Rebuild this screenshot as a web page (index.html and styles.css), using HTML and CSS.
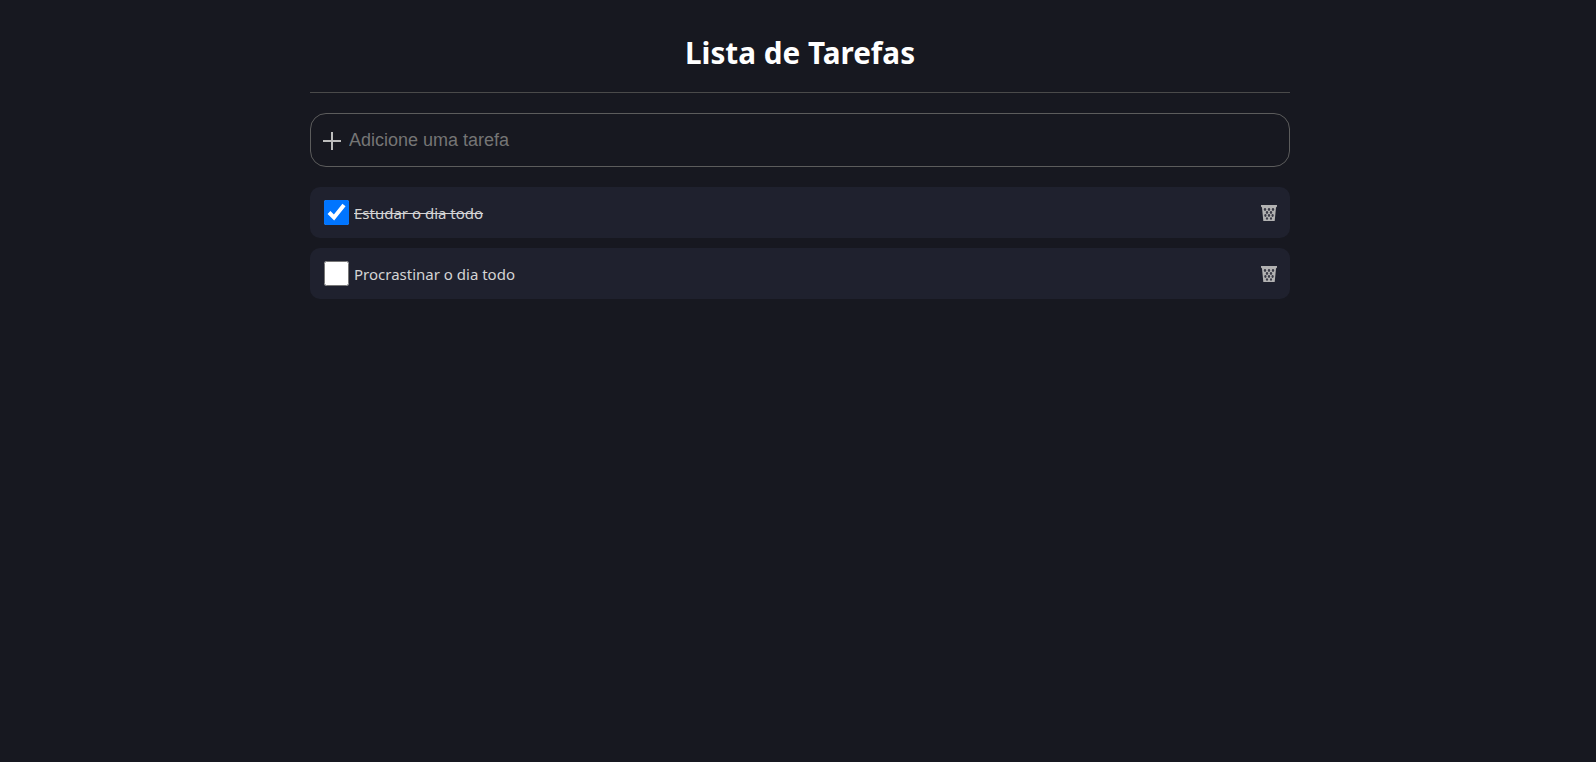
FILE: index.html
```html
<!DOCTYPE html>
<html lang="pt-BR">
<head>
  <meta charset="UTF-8" />
  <title>Lista de Tarefas</title>
  <link rel="stylesheet" href="styles.css">
</head>
<body>
  <svg class="defs" width="0" height="0">
    <symbol id="bin" viewBox="0 0 16 16">
      <path d="M0 0h16v1.500l-1 1-1.300 13.500H2.300L1 2.500l-1-1z" fill="#b2b2b2"/>
      <g fill="#3a3b47">
        <ellipse cx="4" cy="4.500" rx="1.200" ry="1.400"/>
        <ellipse cx="8" cy="4.500" rx="1.200" ry="1.400"/>
        <ellipse cx="12" cy="4.500" rx="1.200" ry="1.400"/>
        <ellipse cx="6" cy="7.500" rx="1.200" ry="1.400"/>
        <ellipse cx="10" cy="7.500" rx="1.200" ry="1.400"/>
        <ellipse cx="4.400" cy="10.500" rx="1.100" ry="1.400"/>
        <ellipse cx="8" cy="10.500" rx="1.200" ry="1.400"/>
        <ellipse cx="11.600" cy="10.500" rx="1.100" ry="1.400"/>
        <ellipse cx="6" cy="13.500" rx="1.100" ry="1.300"/>
        <ellipse cx="10" cy="13.500" rx="1.100" ry="1.300"/>
      </g>
    </symbol>
  </svg>
  <div class="container">
    <h1>Lista de Tarefas</h1>
    <hr />
    <div class="new-task">
      <svg class="plus" width="20" height="20" viewBox="0 0 20 20"><path d="M10 1v18M1 10h18" stroke="#bcbcbc" stroke-width="2" fill="none"/></svg>
      <input type="text" placeholder="Adicione uma tarefa" />
    </div>
    <ul class="tasks">
      <li class="task done">
        <input type="checkbox" class="check" checked />
        <span class="task-text">Estudar o dia todo</span>
        <button class="trash" aria-label="Excluir"><svg width="16" height="16"><use href="#bin"/></svg></button>
      </li>
      <li class="task">
        <input type="checkbox" class="check" />
        <span class="task-text">Procrastinar o dia todo</span>
        <button class="trash" aria-label="Excluir"><svg width="16" height="16"><use href="#bin"/></svg></button>
      </li>
    </ul>
  </div>
</body>
</html>
```

FILE: styles.css
```css
body {
  margin: 0;
  background: #171820;
  color: #fff;
  font-family: "Noto Sans", "Open Sans", sans-serif;
}
.defs {
  display: block;
}
.container {
  width: 980px;
  margin: 0 auto;
  padding: 28px 0 0 4px;
}
h1 {
  margin: 0;
  font-size: 29.700px;
  line-height: 50px;
  font-weight: 700;
  text-align: center;
}
hr {
  margin: 14px 0 20px;
  border: 0;
  border-top: 1px solid #4a4a4a;
}
.new-task {
  display: flex;
  align-items: center;
  gap: 5px;
  height: 54px;
  box-sizing: border-box;
  padding: 0 11px;
  border: 1px solid #5c5c5c;
  border-radius: 16px;
}
.plus {
  margin-top: 2px;
}
.new-task input {
  flex: 1;
  background: none;
  border: 0;
  outline: 0;
  color: #fff;
  font-family: "Liberation Sans", Arial, sans-serif;
  font-size: 18px;
}
.new-task input::placeholder {
  color: #757575;
}
.tasks {
  list-style: none;
  margin: 20px 0 0;
  padding: 0;
  display: flex;
  flex-direction: column;
  gap: 10px;
}
.task {
  display: flex;
  align-items: center;
  gap: 5px;
  height: 51px;
  box-sizing: border-box;
  padding: 0 13px 0 14px;
  background: #1f212e;
  border-radius: 10px;
}
.check {
  width: 25px;
  height: 25px;
  margin: 0;
}
.task-text {
  flex: 1;
  font-size: 15px;
  color: #d4d4d4;
}
.done .task-text {
  text-decoration: line-through;
}
.trash {
  display: flex;
  padding: 0;
  background: none;
  border: 0;
}
```
